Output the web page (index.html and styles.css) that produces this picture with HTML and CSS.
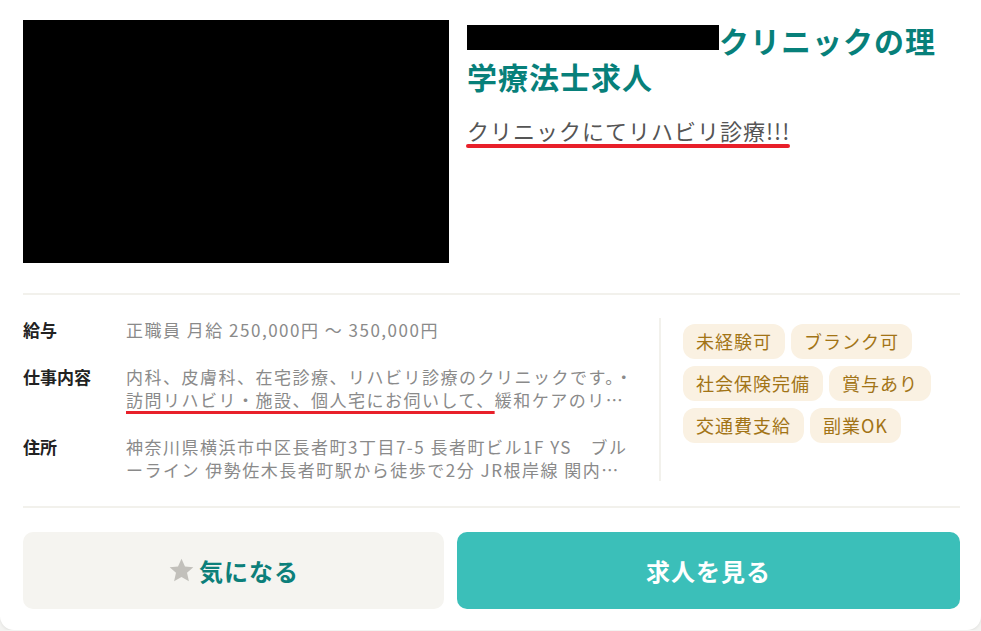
FILE: index.html
```html
<!DOCTYPE html>
<html lang="ja">
<head>
    <meta charset="UTF-8">
    <meta name="viewport" content="width=device-width, initial-scale=1.0">
    <title>求人カード</title>
    <link rel="stylesheet" href="styles.css">
</head>
<body>

    <div class="card">
        <div class="card-top">
            <div class="photo"></div>
            <div class="heading">
                <h1 class="title"><span class="redact">〇〇〇〇〇〇〇〇</span>クリニックの理学療法士求人</h1>
                <p class="catch">クリニックにてリハビリ診療!!!</p>
            </div>
        </div>

        <div class="card-body">
            <dl class="details">
                <dt>給与</dt>
                <dd>正職員 月給 250,000円 〜 350,000円</dd>
                <dt>仕事内容</dt>
                <dd>内科、皮膚科、在宅診療、リハビリ診療のクリニックです。・<span class="mark">訪問リハビリ・施設、</span><span class="mark">個人宅にお伺いして、</span>緩和ケアのリハビリを行っていただきます。</dd>
                <dt>住所</dt>
                <dd>神奈川県横浜市中区長者町3丁目7-5 長者町ビル1F YS　ブルーライン 伊勢佐木長者町駅から徒歩で2分 JR根岸線 関内駅から徒歩で8分</dd>
            </dl>
            <ul class="tags">
                <li>未経験可</li>
                <li>ブランク可</li>
                <li>社会保険完備</li>
                <li>賞与あり</li>
                <li>交通費支給</li>
                <li>副業OK</li>
            </ul>
        </div>

        <div class="actions">
            <button class="btn btn-fav">
                <svg class="star" viewBox="0 0 24 24" width="27" height="27"><path d="M12 1.5l3.1 6.9 7.4.7-5.6 5 1.7 7.4L12 17.7l-6.6 3.8 1.7-7.4-5.6-5 7.4-.7z"/></svg>
                気になる
            </button>
            <button class="btn btn-view">求人を見る</button>
        </div>
    </div>

</body>
</html>
```

FILE: styles.css
```css
body {
    margin: 0;
    background: #f3f3f1;
    font-family: "Noto Sans CJK JP", "Noto Sans", sans-serif;
}

.card {
    background: #ffffff;
    padding: 20px 21px 21px 23px;
    border-radius: 0 0 14px 14px;
    box-shadow: 0 1px 3px rgba(0, 0, 0, 0.08);
}

.card-top {
    display: flex;
    gap: 18px;
    padding-bottom: 30px;
    border-bottom: 2px solid #f2f1ec;
}

.photo {
    width: 426px;
    height: 243px;
    flex-shrink: 0;
    background: #000;
}

.heading {
    flex: 1;
}

.title {
    margin: 2px 0 0;
    font-size: 30px;
    line-height: 36px;
    letter-spacing: 1px;
    font-weight: bold;
    color: #07807a;
}

.redact {
    display: inline-block;
    width: 252px;
    height: 25px;
    overflow: hidden;
    vertical-align: 3px;
    background: #000;
    color: #000;
    line-height: 25px;
}

.catch {
    display: inline-block;
    margin: 23px 0 0;
    font-size: 22px;
    line-height: 27px;
    letter-spacing: 1px;
    color: #555;
}

.catch::after {
    content: "";
    display: block;
    height: 4px;
    margin-left: -1px;
    border-radius: 2px;
    background: #e8202a;
}

.card-body {
    display: grid;
    grid-template-columns: 1fr 301px;
    column-gap: 24px;
    padding: 23px 0 25px;
    border-bottom: 2px solid #f2f1ec;
}

.details {
    display: grid;
    grid-template-columns: 103px 1fr;
    row-gap: 24px;
    margin: 0;
    font-size: 17px;
    line-height: 23px;
}

.details dt {
    font-weight: bold;
    color: #222;
}

.details dd {
    margin: 0 0 -3px;
    padding-bottom: 3px;
    color: #8a8a8a;
    letter-spacing: 1.5px;
    display: -webkit-box;
    -webkit-line-clamp: 2;
    -webkit-box-orient: vertical;
    overflow: hidden;
}

.mark {
    text-decoration: underline 3px #e8202a;
    text-underline-offset: 4px;
}

.tags {
    display: flex;
    flex-wrap: wrap;
    align-content: flex-start;
    gap: 7px 6px;
    margin: 0;
    padding: 6px 0 0 22px;
    list-style: none;
    border-left: 2px solid #f2f1ec;
}

.tags li {
    height: 35px;
    padding: 0 13px;
    border-radius: 12px;
    background: #faf1e2;
    color: #a27416;
    font-size: 18px;
    line-height: 35px;
    letter-spacing: 1px;
}

.actions {
    display: flex;
    gap: 13px;
    margin-top: 24px;
}

.btn {
    display: flex;
    align-items: center;
    justify-content: center;
    gap: 4px;
    height: 77px;
    border: none;
    border-radius: 10px;
    font-family: inherit;
    font-size: 24px;
    font-weight: bold;
    letter-spacing: 1px;
    cursor: pointer;
}

.btn-fav {
    flex: 5;
    background: #f5f4f0;
    color: #0c7f7a;
}

.star {
    fill: #c2c0bb;
}

.btn-view {
    flex: 6;
    background: #3bbfb9;
    color: #fff;
}
```
